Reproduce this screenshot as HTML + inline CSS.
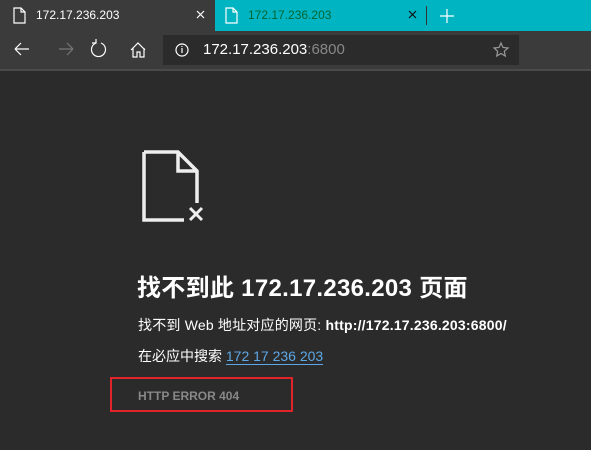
<!DOCTYPE html>
<html><head><meta charset="utf-8"><style>
*{margin:0;padding:0;box-sizing:border-box}
body{width:591px;height:450px;background:#2b2b2b;font-family:"Liberation Sans","Noto Sans CJK SC",sans-serif;color:#fff;position:relative;overflow:hidden}
.abs{position:absolute}
</style></head><body>
<div class="abs" style="left:0;top:0;width:591px;height:31px;background:#00b4c2"></div>
<div class="abs" style="left:0;top:0;width:215px;height:31px;background:#3b3b3b"></div>
<div class="abs" style="left:0;top:31px;width:591px;height:38px;background:#3b3b3b"></div>
<div class="abs" style="left:0;top:69px;width:591px;height:2px;background:#4a4a4a"></div>
<div class="abs" style="left:163px;top:35px;width:356px;height:30px;background:#2b2b2b"></div>
<svg class="abs" style="left:0;top:0" width="591" height="70">
<g fill="none" stroke="#fff" stroke-width="1.2">
<path d="M14 8h7l4 4v11h-11z M21 8v4h4"/>
<path d="M226 8h7l4 4v11h-11z M233 8v4h4"/>
<path d="M197 11l7 7M204 11l-7 7"/>
<path d="M409 11l7 7M416 11l-7 7" stroke="#111"/>
<path d="M440 16h14M447 9v14"/>
<path d="M15 49h14M15 49l6-6M15 49l6 6"/>
<path d="M59 49h14M73 49l-6-6M73 49l-6 6" stroke="#777"/>
<path d="M96 43a7 7 0 1 0 5 0"/><path d="M96 39v4h-4"/>
<path d="M131 50l7-7 7 7M133 48v9h4v-5h3v5h4v-9"/>
<circle cx="182" cy="50" r="6"/><path d="M182 48v5M182 46v1"/>
<path d="M501 43l2 4.5 5 .5-3.7 3.3 1 4.7-4.3-2.5-4.3 2.5 1-4.7-3.7-3.3 5-.5z" stroke="#999"/>
</g>
<rect x="426" y="6" width="1" height="19" fill="#333"/>
</svg>
<div class="abs" style="left:36px;top:8px;font-size:12px">172.17.236.203</div>
<div class="abs" style="left:248px;top:8px;font-size:12px;color:#063">172.17.236.203</div>
<div class="abs" style="left:203px;top:41px;font-size:15px">172.17.236.203<span style="color:#888">:6800</span></div>
<svg class="abs" style="left:140px;top:148px" width="70" height="80">
<g fill="none" stroke="#eee" stroke-width="3.5">
<path d="M4 4h34l19 19v32 M38 4v19h19 M4 4v68h40"/>
<path d="M50 60l12 12M62 60l-12 12" stroke-width="3"/>
</g></svg>
<div class="abs" style="left:137px;top:268px;font-size:24px;font-weight:bold;letter-spacing:0.3px">找不到此 172.17.236.203 页面</div>
<div class="abs" style="left:138px;top:315px;font-size:14px;letter-spacing:0.2px">找不到 Web 地址对应的网页: <b>http://172.17.236.203:6800/</b></div>
<div class="abs" style="left:138px;top:346px;font-size:14px">在必应中搜索 <span style="color:#5ea7e6;border-bottom:1px solid #5ea7e6">172 17 236 203</span></div>
<div class="abs" style="left:138px;top:389px;font-size:12px;font-weight:bold;color:#888">HTTP ERROR 404</div>
<div class="abs" style="left:110px;top:377px;width:183px;height:35px;border:2px solid #e0242a"></div>
</body></html>
